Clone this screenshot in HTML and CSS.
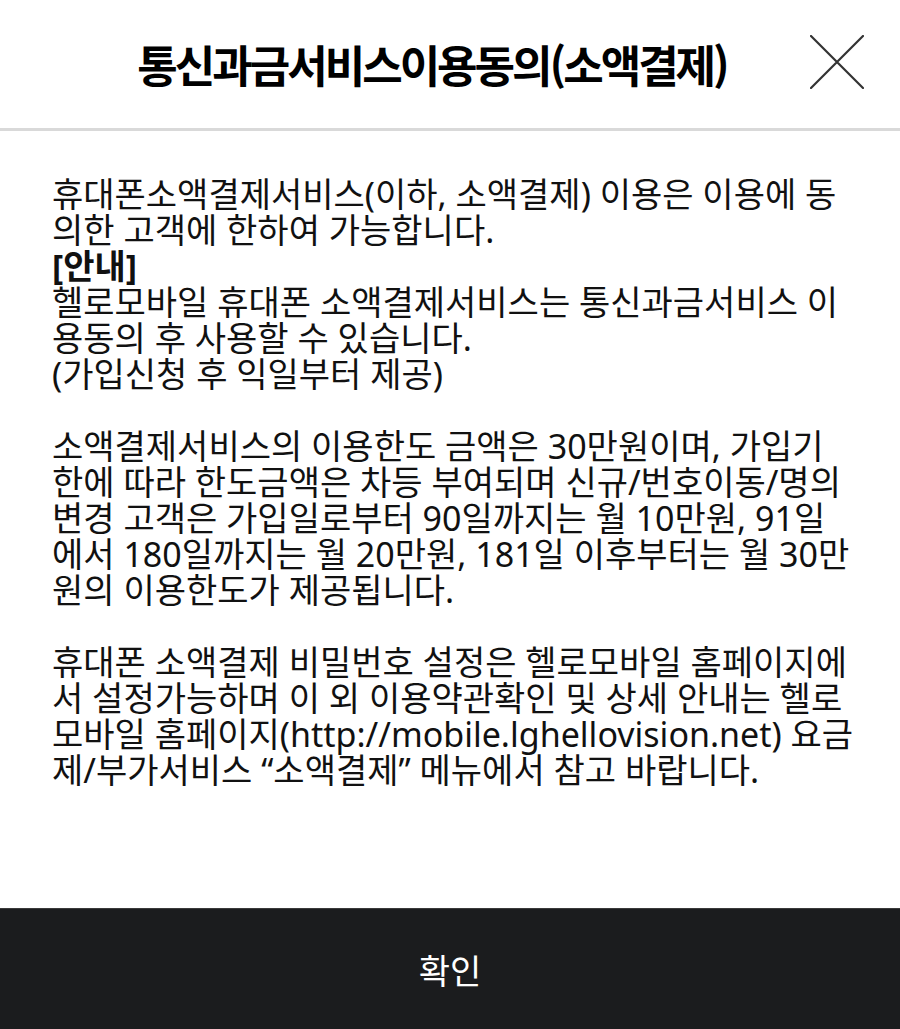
FILE: index.html
```html
<!DOCTYPE html>
<html lang="ko">
<head>
<meta charset="utf-8">
<title>통신과금서비스이용동의(소액결제)</title>
<link rel="stylesheet" href="styles.css">
</head>
<body>
<div class="page">
  <header class="header">
    <h1 class="title">통신과금서비스이용동의(소액결제)</h1>
    <button class="close" type="button" aria-label="닫기">
      <svg width="54" height="54" viewBox="0 0 54 54"><path d="M1 1L53 53M53 1L1 53" stroke="#333" stroke-width="2.2" stroke-linecap="round" fill="none"/></svg>
    </button>
  </header>
  <main class="content">
    <p class="para">휴대폰소액결제서비스(이하, 소액결제) 이용은 이용에 동의한 고객에 한하여 가능합니다.<br><strong class="label">[안내]</strong><br>헬로모바일 휴대폰 소액결제서비스는 통신과금서비스 이용동의 후 사용할 수 있습니다.<br>(가입신청 후 익일부터 제공)</p>
    <p class="para">소액결제서비스의 이용한도 금액은 30만원이며, 가입기한에 따라 한도금액은 차등 부여되며 신규/번호이동/명의변경 고객은 가입일로부터 90일까지는 월 10만원, 91일에서 180일까지는 월 20만원, 181일 이후부터는 월 30만원의 이용한도가 제공됩니다.</p>
    <p class="para">휴대폰 소액결제 비밀번호 설정은 헬로모바일 홈페이지에서 설정가능하며 이 외 이용약관확인 및 상세 안내는 헬로모바일 홈페이지(http://mobile.lghellovision.net) 요금제/부가서비스 “소액결제” 메뉴에서 참고 바랍니다.</p>
  </main>
  <footer class="footer">
    <button class="confirm" type="button">확인</button>
  </footer>
</div>
</body>
</html>
```
FILE: styles.css
```css
* { box-sizing: border-box; }
html, body { margin: 0; padding: 0; background: #fff; }
body {
  font-family: "Noto Sans", "Noto Sans CJK KR", sans-serif;
  color: #111;
}
.page {
  width: 900px;
  height: 1029px;
  display: flex;
  flex-direction: column;
}
.header {
  height: 131px;
  flex: none;
  display: flex;
  align-items: center;
  border-bottom: 3px solid #d9d9d9;
  position: relative;
}
.title {
  margin: 0;
  width: 864px;
  text-align: center;
  font-family: "Noto Sans CJK KR", sans-serif;
  font-weight: 700;
  font-size: 44px;
  letter-spacing: -3px;
  color: #000;
  line-height: 1;
}
.close {
  position: absolute;
  left: 810px;
  top: 35px;
  width: 54px;
  height: 54px;
  padding: 0;
  border: 0;
  background: none;
}
.close svg { display: block; }
.content {
  flex: 1;
  padding: 45px 46px 0 52px;
}
.para {
  margin: 0 0 36px 0;
  font-size: 34px;
  line-height: 36px;
  color: #111;
}
.label { font-weight: 700; }
.footer {
  flex: none;
  height: 121px;
  background: #1b1c1e;
  border-top: 1px solid #3a3a3a;
}
.confirm {
  width: 100%;
  height: 100%;
  border: 0;
  background: none;
  color: #fff;
  font-family: "Noto Sans CJK KR", sans-serif;
  font-size: 34px;
  padding: 0;
}
```
